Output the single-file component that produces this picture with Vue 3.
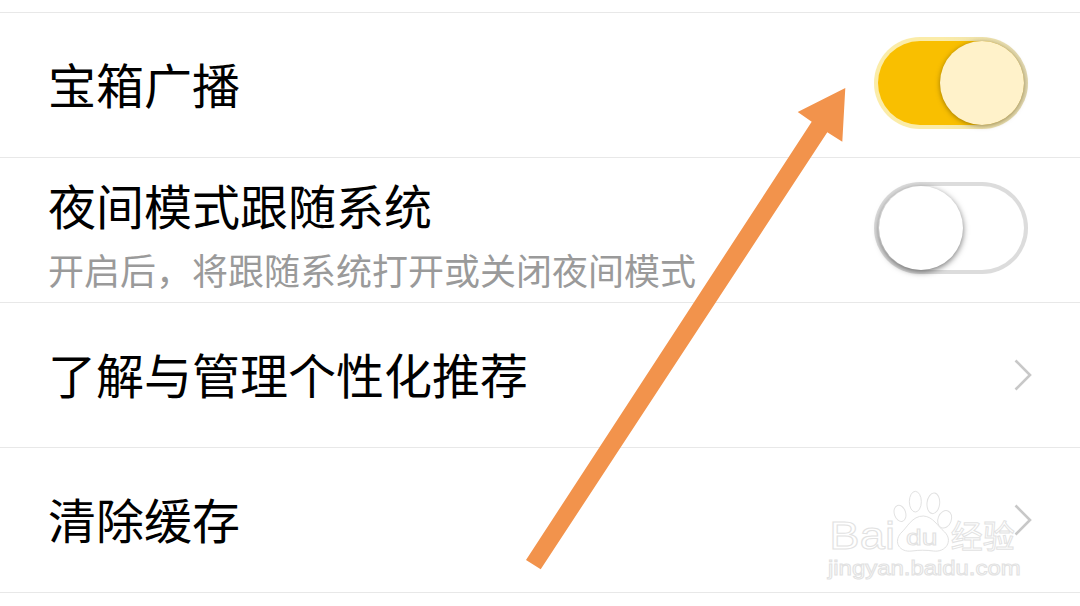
<script setup>
const rows = [
  { title: '宝箱广播', toggle: 'on' },
  { title: '夜间模式跟随系统', sub: '开启后，将跟随系统打开或关闭夜间模式', toggle: 'off' },
  { title: '了解与管理个性化推荐', chevron: true },
  { title: '清除缓存', chevron: true },
]
</script>

<template>
  <div class="page">
    <div class="top"></div>
    <div v-for="r in rows" :key="r.title" class="row">
      <div class="text">
        <div class="title" :class="{ withsub: r.sub }">{{ r.title }}</div>
        <div v-if="r.sub" class="sub">{{ r.sub }}</div>
      </div>
      <div v-if="r.toggle" class="switch" :class="r.toggle">
        <span class="knob"></span>
      </div>
      <svg v-if="r.chevron" class="chev" viewBox="0 0 20 34" width="20" height="34">
        <path d="M2.5 2.5 L17 17 L2.5 31.5" fill="none" stroke="#c8c8c8" stroke-width="2.6" />
      </svg>
    </div>

    <svg class="overlay" viewBox="0 0 1080 606" width="1080" height="606">
      <polygon class="arrow" points="845.3,88 797.7,112 811.7,121.7 526,560 540.7,569.3 827.3,132.3 842.3,141.7" />
    </svg>

    <svg class="mark" viewBox="0 0 840 378" width="280" height="126">
      <g class="outline">
        <ellipse cx="300" cy="100" rx="17" ry="25" transform="rotate(-18 300 100)" />
        <ellipse cx="346" cy="65" rx="18" ry="31" />
        <ellipse cx="400" cy="70" rx="19" ry="31" transform="rotate(6 400 70)" />
        <ellipse cx="434" cy="118" rx="20" ry="27" transform="rotate(22 434 118)" />
        <path d="M370 108 C400 110 412 138 434 156 C460 182 438 218 400 213 C380 210 356 210 336 213 C298 218 280 186 302 160 C322 142 336 108 370 108 Z" />
        <text class="du" x="318" y="194" textLength="94" lengthAdjust="spacingAndGlyphs">du</text>
        <text class="bai" x="88" y="207" textLength="197" lengthAdjust="spacingAndGlyphs">Bai</text>
        <text class="jy" x="452" y="203">经验</text>
        <text class="url" x="84" y="286" textLength="578" lengthAdjust="spacingAndGlyphs">jingyan.baidu.com</text>
      </g>
    </svg>
  </div>
</template>

<style>
html, body { margin: 0; background: #fff; }
</style>

<style scoped>
.page {
  position: relative;
  width: 1080px;
  height: 606px;
  overflow: hidden;
  background: #fff;
  font-family: "Noto Sans CJK SC", "Noto Sans", sans-serif;
}
.top { height: 12px; }
.row {
  display: flex;
  align-items: center;
  justify-content: space-between;
  box-sizing: content-box;
  height: 140px;
  padding: 0 52px 4px 48px;
  border-top: 1px solid #e8e8e8;
}
.row:last-of-type { border-bottom: 1px solid #e8e8e8; }
.text { display: flex; flex-direction: column; }
.title { font-size: 48px; line-height: 60px; color: #000; }
.title.withsub { margin-top: 11px; }
.sub { font-size: 36px; line-height: 48px; color: #9a9a9a; margin-top: 11px; }
.switch {
  position: relative;
  box-sizing: border-box;
  width: 154px;
  height: 92px;
  border-radius: 46px;
  border: 4px solid transparent;
}
.switch.on {
  background:
    linear-gradient(90deg, #f9bf00 0, #f9bf00 65%, #c9a52a 100%) padding-box,
    linear-gradient(90deg, #fbeca8 0, #fbeca8 45%, #e2d9b2 100%) border-box;
}
.switch.off { background: linear-gradient(#fff, #fff) padding-box, linear-gradient(#dcdcdc, #dcdcdc) border-box; }
.knob {
  position: absolute;
  top: 0;
  width: 84px;
  height: 84px;
  border-radius: 50%;
}
.switch.on .knob {
  right: 0;
  background: #fff2ca;
  box-shadow: 0 1px 5px rgba(80, 60, 0, 0.55);
}
.switch.off .knob {
  left: 1px;
  background: #fff;
  box-shadow: 0 2px 6px rgba(0, 0, 0, 0.55);
}
.chev { margin: 4px -5px 0 0; }
.overlay { position: absolute; left: 0; top: 0; pointer-events: none; }
.arrow { fill: #f2934c; }
.mark { position: absolute; left: 800px; top: 480px; pointer-events: none; }
.outline { fill: #fff; stroke: #e2e2e2; stroke-width: 3; }
.du { font: 400 68px "Liberation Sans", sans-serif; }
.bai { font: 400 114px "Liberation Sans", sans-serif; }
.jy { font: 400 96px "Noto Sans CJK SC", sans-serif; }
.url { font: 400 60px "Liberation Sans", sans-serif; }
</style>
